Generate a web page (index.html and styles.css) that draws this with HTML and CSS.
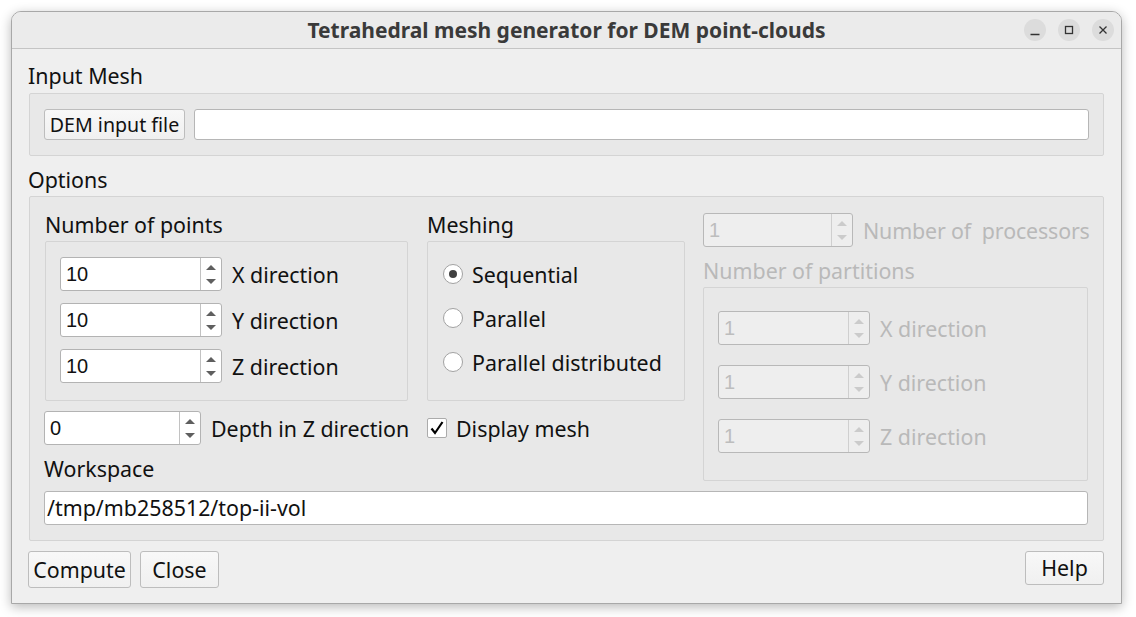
FILE: index.html
```html
<!DOCTYPE html>
<html>
<head>
<meta charset="utf-8">
<link rel="stylesheet" href="styles.css">
</head>
<body>
<div class="window">
  <div class="titlebar">
    <div class="spacer"></div>
    <div class="title">Tetrahedral mesh generator for DEM point-clouds</div>
    <div class="wbtns">
      <span class="wbtn"><svg width="22" height="22" viewBox="0 0 22 22"><path d="M6.5 15.5h9" stroke="#333" stroke-width="1.3" fill="none"/></svg></span>
      <span class="wbtn"><svg width="22" height="22" viewBox="0 0 22 22"><rect x="7.5" y="7.5" width="7" height="7" stroke="#333" stroke-width="1.3" fill="none"/></svg></span>
      <span class="wbtn"><svg width="22" height="22" viewBox="0 0 22 22"><path d="M7.5 7.5l7 7M14.5 7.5l-7 7" stroke="#333" stroke-width="1.3" fill="none"/></svg></span>
    </div>
  </div>
  <div class="content">
    <div class="glabel first">Input Mesh</div>
    <div class="group input-group">
      <button class="btn dem">DEM input file</button>
      <div class="lineedit grow"></div>
    </div>
    <div class="glabel opts">Options</div>
    <div class="group options">
      <div class="opt-grid">
        <div class="lbl c1">Number of points</div>
        <div class="lbl c2">Meshing</div>
        <div class="group np c1">
          <div class="row"><div class="spin w161"><span class="val">10</span><span class="arrows"><i class="up"></i><i class="dn"></i></span></div><span class="rl">X direction</span></div>
          <div class="row"><div class="spin w161"><span class="val">10</span><span class="arrows"><i class="up"></i><i class="dn"></i></span></div><span class="rl">Y direction</span></div>
          <div class="row"><div class="spin w161"><span class="val">10</span><span class="arrows"><i class="up"></i><i class="dn"></i></span></div><span class="rl">Z direction</span></div>
        </div>
        <div class="group mesh c2">
          <div class="radio-row"><span class="radio on"></span><span>Sequential</span></div>
          <div class="radio-row"><span class="radio"></span><span>Parallel</span></div>
          <div class="radio-row"><span class="radio"></span><span>Parallel distributed</span></div>
        </div>
        <div class="row depth c1"><div class="spin w157"><span class="val">0</span><span class="arrows"><i class="up"></i><i class="dn"></i></span></div><span class="rl">Depth in Z direction</span></div>
        <div class="check-row c2"><span class="check"><svg width="18" height="18" viewBox="0 0 18 18"><path d="M3.5 9.5l3.5 4.5 7.5-11" stroke="#000" stroke-width="2.2" fill="none"/></svg></span><span>Display mesh</span></div>
        <div class="lbl ws-lbl c1">Workspace</div>
        <div class="col3">
          <div class="row proc"><div class="spin dis w150"><span class="val">1</span><span class="arrows"><i class="up"></i><i class="dn"></i></span></div><span class="rl">Number of&nbsp; processors</span></div>
          <div class="lbl dlbl">Number of partitions</div>
          <div class="group parts">
            <div class="row"><div class="spin dis w152"><span class="val">1</span><span class="arrows"><i class="up"></i><i class="dn"></i></span></div><span class="rl">X direction</span></div>
            <div class="row"><div class="spin dis w152"><span class="val">1</span><span class="arrows"><i class="up"></i><i class="dn"></i></span></div><span class="rl">Y direction</span></div>
            <div class="row"><div class="spin dis w152"><span class="val">1</span><span class="arrows"><i class="up"></i><i class="dn"></i></span></div><span class="rl">Z direction</span></div>
          </div>
        </div>
      </div>
      <div class="lineedit ws">/tmp/mb258512/top-ii-vol</div>
    </div>
    <div class="buttons">
      <button class="btn big compute">Compute</button>
      <button class="btn big close">Close</button>
      <div class="grow"></div>
      <button class="btn help">Help</button>
    </div>
  </div>
</div>
</body>
</html>
```

FILE: styles.css
```css
html, body { margin: 0; padding: 0; }
body {
  background: #ffffff;
  font-family: "Noto Sans", "Open Sans", sans-serif;
  font-size: 21.4px;
  color: #111;
  width: 1136px;
  height: 617px;
  overflow: hidden;
}
.window {
  margin: 11px 0 0 11px;
  width: 1111px;
  height: 593px;
  box-sizing: border-box;
  border: 1px solid #a8a8a8;
  border-radius: 10px 10px 0 0;
  background: #efefef;
  box-shadow: 0 3px 12px rgba(0,0,0,0.28);
  overflow: hidden;
  display: flex;
  flex-direction: column;
}
.titlebar {
  flex: none;
  height: 36px;
  background: #ebebeb;
  border-bottom: 1px solid #c4c4c4;
  display: grid;
  grid-template-columns: 1fr auto 1fr;
  align-items: center;
}
.title {
  font-weight: bold;
  font-size: 21px;
  color: #3a3a3a;
  white-space: nowrap;
}
.wbtns {
  display: flex;
  justify-content: flex-end;
  gap: 12px;
  padding-right: 7px;
}
.wbtn {
  width: 22px;
  height: 22px;
  border-radius: 50%;
  background: #dcdcdc;
  display: block;
}
.wbtn svg { display: block; }
.content {
  flex: 1;
  padding: 15px 17px 0 17px;
  display: flex;
  flex-direction: column;
}
.glabel, .lbl {
  height: 24px;
  line-height: 24px;
  white-space: nowrap;
}
.glabel { margin-left: -1px; margin-bottom: 5px; }
.glabel.opts { margin-top: 12px; margin-bottom: 4px; }
.group {
  background: #e8e8e8;
  border: 1px solid #d4d4d4;
  border-radius: 2px;
  box-sizing: border-box;
}
.input-group {
  display: flex;
  gap: 9px;
  padding: 15px 14px 15px 14px;
}
.grow { flex: 1; }
.btn {
  font-family: inherit;
  font-size: 21.4px;
  color: #111;
  background: linear-gradient(#f8f8f8, #f0f0f0);
  border: 1px solid #bdbdbd;
  border-radius: 3px;
  padding: 0;
  box-sizing: border-box;
  margin: 0;
  white-space: nowrap;
}
.btn.dem { height: 31px; width: 141px; line-height: 29px; font-size: 19.6px; }
.lineedit {
  height: 31px;
  background: #fff;
  border: 1px solid #b6b6b6;
  border-radius: 3px;
  box-sizing: border-box;
}
.options {
  padding: 16px 15px 15px 15px;
  height: 345px;
}
.opt-grid {
  display: grid;
  grid-template-columns: 363px 258px minmax(0, 1fr);
  column-gap: 19px;
  height: 268px;
}
.c1 { grid-column: 1; }
.c2 { grid-column: 2; }
.np, .mesh { margin-top: 4px; height: 160px; }
.np {
  padding: 15px 14px 0 14px;
  display: flex;
  flex-direction: column;
  gap: 12px;
}
.row {
  display: flex;
  align-items: center;
  gap: 10px;
  white-space: nowrap;
}
.spin {
  height: 34px;
  display: flex;
  box-sizing: border-box;
  border: 1px solid #b3b3b3;
  border-radius: 3px;
  background: #fff;
  flex: none;
}
.w161 { width: 162px; }
.w157 { width: 157px; }
.w150 { width: 150px; }
.w152 { width: 152px; }
.val {
  flex: 1;
  font-family: "Liberation Sans", Arial, sans-serif;
  font-size: 20px;
  line-height: 32px;
  padding-left: 5px;
}
.arrows {
  width: 20px;
  border-left: 1px solid #c2c2c2;
  display: flex;
  flex-direction: column;
  align-items: center;
  justify-content: center;
  gap: 9px;
}
.arrows i { display: block; width: 0; height: 0; border-left: 5px solid transparent; border-right: 5px solid transparent; }
.arrows .up { border-bottom: 5px solid #5f5f5f; }
.arrows .dn { border-top: 5px solid #5f5f5f; }
.spin.dis { background: #eeeeee; border-color: #b8b8b8; }
.spin.dis .val { color: #bdbdbd; }
.spin.dis .arrows { border-left-color: #cfcfcf; }
.spin.dis .arrows .up { border-bottom-color: #cbcbcb; }
.spin.dis .arrows .dn { border-top-color: #cbcbcb; }
.mesh {
  padding: 16px 15px 0 15px;
  display: flex;
  flex-direction: column;
  gap: 12px;
}
.radio-row {
  height: 32px;
  display: flex;
  align-items: center;
  gap: 9px;
  white-space: nowrap;
}
.radio {
  width: 20px;
  height: 20px;
  box-sizing: border-box;
  border-radius: 50%;
  border: 1px solid #a2a2a2;
  background: #fff;
  display: flex;
  align-items: center;
  justify-content: center;
  flex: none;
}
.radio.on::after {
  content: "";
  width: 8px;
  height: 8px;
  border-radius: 50%;
  background: #404040;
}
.depth { margin-top: 10px; margin-left: -1px; height: 34px; }
.check-row {
  margin-top: 10px;
  height: 34px;
  display: flex;
  align-items: center;
  gap: 9px;
  white-space: nowrap;
}
.check {
  width: 20px;
  height: 20px;
  box-sizing: border-box;
  border: 1px solid #ababab;
  border-radius: 2px;
  background: #fff;
  display: flex;
  align-items: center;
  justify-content: center;
}
.check svg { display: block; }
.ws-lbl { margin-top: 12px; margin-left: -1px; }
.col3 {
  grid-column: 3;
  grid-row: 1 / 5;
  min-width: 0;
  display: flex;
  flex-direction: column;
  color: #b9b9b9;
}
.proc { height: 34px; margin-left: -1px; letter-spacing: -0.15px; }
.dlbl { margin-top: 12px; margin-left: -1px; }
.parts {
  margin-top: 4px;
  height: 194px;
  margin-left: -1px;
  padding: 23px 14px 0 14px;
  display: flex;
  flex-direction: column;
  gap: 20px;
}
.lineedit.ws {
  margin-top: 10px;
  margin-left: -1px;
  height: 34px;
  line-height: 32px;
  padding-left: 2px;
  white-space: nowrap;
}
.buttons {
  display: flex;
  align-items: flex-start;
  margin-top: 10px;
  margin-left: -1px;
  margin-right: 0;
}
.btn.big { height: 37px; line-height: 35px; }
.btn.compute { width: 103px; }
.btn.close { width: 79px; margin-left: 9px; }
.btn.help { width: 79px; height: 34px; line-height: 32px; }
```
